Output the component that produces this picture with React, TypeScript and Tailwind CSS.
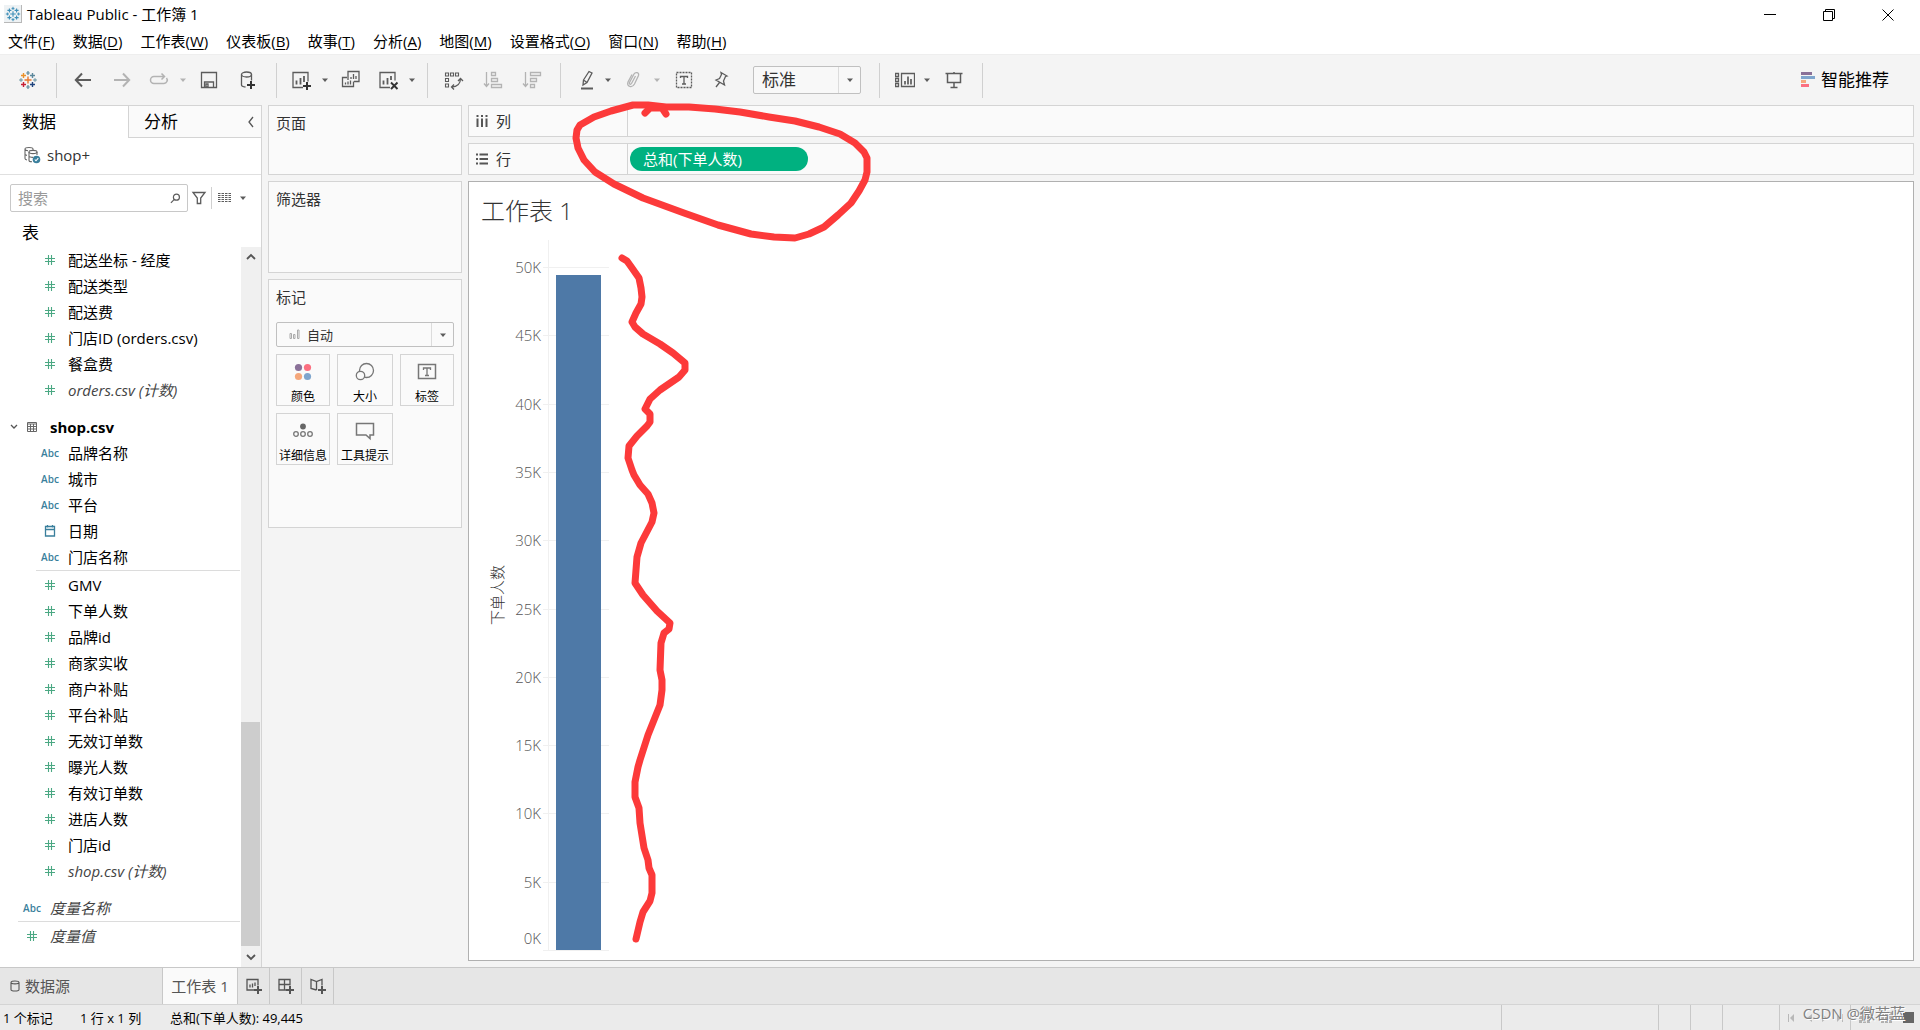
import { useState } from 'react';
import type { ReactNode } from 'react';
import clsx from 'clsx';

const menus = [
  { label: '文件', key: 'F' },
  { label: '数据', key: 'D' },
  { label: '工作表', key: 'W' },
  { label: '仪表板', key: 'B' },
  { label: '故事', key: 'T' },
  { label: '分析', key: 'A' },
  { label: '地图', key: 'M' },
  { label: '设置格式', key: 'O' },
  { label: '窗口', key: 'N' },
  { label: '帮助', key: 'H' },
];

type Field = { type: 'num' | 'abc' | 'date'; name: string; italic?: boolean };

const orderFields: Field[] = [
  { type: 'num', name: '配送坐标 - 经度' },
  { type: 'num', name: '配送类型' },
  { type: 'num', name: '配送费' },
  { type: 'num', name: '门店ID (orders.csv)' },
  { type: 'num', name: '餐盒费' },
  { type: 'num', name: 'orders.csv (计数)', italic: true },
];

const shopDimensions: Field[] = [
  { type: 'abc', name: '品牌名称' },
  { type: 'abc', name: '城市' },
  { type: 'abc', name: '平台' },
  { type: 'date', name: '日期' },
  { type: 'abc', name: '门店名称' },
];

const shopMeasures: Field[] = [
  { type: 'num', name: 'GMV' },
  { type: 'num', name: '下单人数' },
  { type: 'num', name: '品牌id' },
  { type: 'num', name: '商家实收' },
  { type: 'num', name: '商户补贴' },
  { type: 'num', name: '平台补贴' },
  { type: 'num', name: '无效订单数' },
  { type: 'num', name: '曝光人数' },
  { type: 'num', name: '有效订单数' },
  { type: 'num', name: '进店人数' },
  { type: 'num', name: '门店id' },
  { type: 'num', name: 'shop.csv (计数)', italic: true },
];

function Icon({ children, size = 20, className }: { children: ReactNode; size?: number; className?: string }) {
  return (
    <svg width={size} height={size} viewBox={`0 0 ${size} ${size}`} fill="none" stroke="currentColor" strokeWidth="1.3" className={clsx('shrink-0', className)} aria-hidden="true">
      {children}
    </svg>
  );
}

function Logo({ color = false, size = 20 }: { color?: boolean; size?: number }) {
  const c = color ? ['#e8762d', '#5b879b', '#eb9129', '#c72035', '#1f447e', '#59879b', '#7099a6'] : Array(7).fill('#3f8fb8');
  return (
    <svg width={size} height={size} viewBox="0 0 20 20" fill="none" aria-hidden="true" className="shrink-0">
      <path d="M10 6.5v7M6.5 10h7" stroke={c[0]} strokeWidth="1.4" />
      <path d="M14.5 3v5M12 5.5h5" stroke={c[1]} strokeWidth="1.4" />
      <path d="M5.5 3v5M3 5.5h5" stroke={c[2]} strokeWidth="1.4" />
      <path d="M5.5 12v5M3 14.5h5" stroke={c[3]} strokeWidth="1.4" />
      <path d="M14.5 12v5M12 14.5h5" stroke={c[4]} strokeWidth="1.4" />
      <path d="M10 1v4M8.2 3h3.6M10 15v4M8.2 17h3.6" stroke={c[5]} strokeWidth="1.2" />
      <path d="M1 10h4M3 8.2v3.6M15 10h4M17 8.2v3.6" stroke={c[6]} strokeWidth="1.2" />
    </svg>
  );
}

function Caret({ className }: { className?: string }) {
  return (
    <svg width="8" height="8" viewBox="0 0 8 8" className={clsx('shrink-0', className)} fill="currentColor" aria-hidden="true">
      <path d="M1 2.5h6L4 6z" />
    </svg>
  );
}

function Tool({ label, className, children }: { label: string; className?: string; children: ReactNode }) {
  return (
    <button type="button" aria-label={label} className={clsx('shrink-0', className)}>
      {children}
    </button>
  );
}

function Divider({ className }: { className: string }) {
  return <div className={clsx('w-px h-[35px] bg-[#d0d0d0] shrink-0', className)} />;
}

function Toolbar() {
  return (
    <div className="h-[51px] bg-[#f4f4f4] border-t border-[#eeeeee] flex items-center text-[#5c5c5c]">
      <Tool label="开始页面" className="ml-[18px]"><Logo color /></Tool>
      <Divider className="ml-[18px]" />
      <Tool label="撤销" className="ml-4">
        <Icon><path d="M18 10H3M9 3.5L2.8 10L9 16.5" strokeWidth="2" /></Icon>
      </Tool>
      <Tool label="重做" className="ml-[19px] text-[#b3b3b3]">
        <Icon><path d="M2 10h15M11 3.5L17.2 10L11 16.5" strokeWidth="2" /></Icon>
      </Tool>
      <Tool label="重播" className="ml-[17px] text-[#b3b3b3]">
        <Icon><path d="M15 6.5H5a3.500 3.500 0 0 0 0 7h10a3.400 3.400 0 0 0 2.500-5.500M12.500 3.500l3 3-3 3" strokeWidth="1.5" /></Icon>
      </Tool>
      <Caret className="ml-[10px] text-[#b3b3b3]" />
      <Tool label="保存" className="ml-3">
        <Icon><path d="M2.5 2.5h15v15h-15zM5.5 17v-5h9v5M7 14h2v3H7z" /></Icon>
      </Tool>
      <Tool label="新建数据源" className="ml-[19px]">
        <Icon>
          <ellipse cx="8.5" cy="4.5" rx="5" ry="2.5" />
          <path d="M3.5 4.5v10.5c0 1 2 1.8 4 2M13.5 4.5v6" />
          <path d="M13 11v8M9 15h8" stroke="#333" strokeWidth="2" />
        </Icon>
      </Tool>
      <Divider className="ml-[18px]" />
      <Tool label="新建工作表" className="ml-[15px]">
        <Icon>
          <path d="M11 17.5H1V2.5h15v9" />
          <path d="M4.5 14.5v-4M8.5 14.5V8M12 12V6" strokeWidth="1.8" />
          <path d="M15 12v8M11 16h8" stroke="#333" strokeWidth="2" />
        </Icon>
      </Tool>
      <Caret className="ml-[9px]" />
      <Tool label="复制工作表" className="ml-3">
        <Icon>
          <path d="M7 10V1.5h11v10h-5M6 7.5H1.5v9h11v-5" />
          <path d="M10 9V7M12.5 9V4M15 9V6M4.5 14.5v-2M7 14.5v-3M9.5 14.5v-4" />
        </Icon>
      </Tool>
      <Tool label="清除工作表" className="ml-[18px]">
        <Icon>
          <path d="M11 17.5H1V2.5h15v8" />
          <path d="M4.5 14.5v-4M8.5 14.5V8M12 10V6" strokeWidth="1.8" />
          <path d="M12 12.5l6.5 6.5M18.5 12.5L12 19" stroke="#333" strokeWidth="1.9" />
        </Icon>
      </Tool>
      <Caret className="ml-[9px]" />
      <Divider className="ml-[11px]" />
      <Tool label="交换行和列" className="ml-4">
        <Icon>
          <path d="M1.5 3h3v3h-3zM6.500 3h3v3h-3zM11.500 3h3v3h-3zM1.500 8.500h3v3h-3zM1.500 14h3v3h-3z" strokeWidth="1.1" />
          <path d="M16.5 8.500c0 5-3 8.500-9 8.500M14 11l2.500-2.500L19 11M10 14.500L7.500 17l2.500 2.500" />
        </Icon>
      </Tool>
      <Tool label="升序排序" className="ml-[19px] text-[#b3b3b3]">
        <Icon><path d="M3.5 2v14M1 13.5l2.500 3 2.500-3M8.500 2.500h4v3h-4zM8.500 8.500h6v3h-6zM8.500 14.500h10v3h-10z" /></Icon>
      </Tool>
      <Tool label="降序排序" className="ml-[19px] text-[#b3b3b3]">
        <Icon><path d="M3.5 2v14M1 13.5l2.500 3 2.500-3M8.500 2.500h10v3h-10zM8.500 8.500h6v3h-6zM8.500 14.500h4v3h-4z" /></Icon>
      </Tool>
      <Divider className="ml-[18px]" />
      <Tool label="突出显示" className="ml-4">
        <Icon>
          <path d="M6.5 10l5.500-8.500 3 1.500-5 9.500-4 2.500zM6.500 10l3.500 2.500" />
          <path d="M4 18.500h12" strokeWidth="2" />
        </Icon>
      </Tool>
      <Caret className="ml-[7px]" />
      <Tool label="组成员" className="ml-[11px] text-[#b3b3b3]">
        <Icon><path d="M12.5 6l-4 7.500c-1 1.500-2.500.5-2-1L11 4c1.500-2.500 5.500-1.500 4.500 1.500L11.500 14c-2.500 4.500-8 2.500-6.500-2L9 4.500" /></Icon>
      </Tool>
      <Caret className="ml-[10px] text-[#b3b3b3]" />
      <Tool label="显示标记标签" className="ml-[13px]">
        <Icon>
          <path d="M2.5 2.5h15v15h-15z" strokeDasharray="2 1" />
          <path d="M6.5 8V6.500h7V8M10 6.500v7.500M8 14h4" />
        </Icon>
      </Tool>
      <Tool label="固定轴" className="ml-[17px]">
        <Icon><path d="M10 2.500l6 3.500-1.500.5-2 4.500 1 4-8.500-5 3.500-1.500 2-4zM8.500 12.500L5 17" /></Icon>
      </Tool>
      <div className="relative ml-[22px] w-[108px]">
        <select aria-label="适合" className="appearance-none w-full h-7 pl-2 border border-[#c0c0c0] rounded-[2px] bg-[#f8f8f8] text-[17px] leading-6 text-[#333]">
          <option>标准</option>
          <option>适合宽度</option>
          <option>适合高度</option>
          <option>整个视图</option>
        </select>
        <span className="absolute right-0 inset-y-px w-[23px] border-l border-[#dcdcdc] flex items-center justify-center pointer-events-none">
          <Caret />
        </span>
      </div>
      <Divider className="ml-[18px]" />
      <Tool label="显示/隐藏卡" className="ml-[15px]">
        <Icon>
          <path d="M.5 3.500h3v3h-3zM.5 8.500h3v3h-3zM.5 13.500h3v3h-3zM6.500 3.500h13v13h-13z" />
          <path d="M10 14.500V11M13 14.500V6.500M16 14.500V9" strokeWidth="1.7" />
        </Icon>
      </Tool>
      <Caret className="ml-2" />
      <Tool label="演示模式" className="ml-[13px]">
        <Icon><path d="M1.500 3.500h17M3.500 3.500v9h13v-9M10 2v2M10 13v4.500M6.500 17.500h7" strokeWidth="1.5" /></Icon>
      </Tool>
      <Divider className="ml-[18px]" />
      <button type="button" className="ml-auto mr-[31px] flex items-center gap-[6px] text-[17px] text-black">
        <svg width="14" height="16" viewBox="0 0 14 16" aria-hidden="true">
          <path d="M0 0h11v3H0z" fill="#8a7198" />
          <path d="M0 4h14v3H0z" fill="#7fa5cd" />
          <path d="M0 8h5v3H0z" fill="#f5a77b" />
          <path d="M0 12h8v3H0z" fill="#fb6f80" />
        </svg>
        智能推荐
      </button>
    </div>
  );
}

function FieldIcon({ type }: { type: Field['type'] }) {
  if (type === 'abc') return <span className="w-4 flex justify-center text-[10px] leading-4 font-semibold text-[#3a7f9c]">Abc</span>;
  if (type === 'date') {
    return (
      <Icon size={16} className="text-[#3a7f9c]">
        <path d="M3.5 3.5h9v9.500h-9zM3.500 6.500h9M5.500 2v2.500M10.500 2v2.500" />
      </Icon>
    );
  }
  return (
    <Icon size={16} className="text-[#4ba883]">
      <path d="M6.5 3v10M9.5 3v10M3 6.500h10M3 9.500h10" strokeWidth="1.1" />
    </Icon>
  );
}

function FieldRow({ field, className = 'pl-[42px]' }: { field: Field; className?: string }) {
  return (
    <li className={clsx('h-[26px] flex items-center gap-[10px] whitespace-nowrap', className)}>
      <FieldIcon type={field.type} />
      <span className={field.italic ? 'italic text-[#444]' : ''}>{field.name}</span>
    </li>
  );
}

function DataPane() {
  const [search, setSearch] = useState('');
  return (
    <aside className="w-[262px] shrink-0 bg-white border-r border-t border-[#d4d4d4] flex flex-col">
      <div className="h-8 flex shrink-0 text-[17px]">
        <button type="button" className="w-32 pl-[22px] text-left">数据</button>
        <div className="flex-1 flex items-center justify-between pl-[15px] pr-[6px] bg-[#fafafa] border-l border-b border-[#d4d4d4]">
          <button type="button">分析</button>
          <button type="button" aria-label="折叠" className="text-[#555]">
            <svg width="8" height="12" viewBox="0 0 8 12" fill="none" stroke="currentColor" strokeWidth="1.3"><path d="M6 1L2 6l4 5" /></svg>
          </button>
        </div>
      </div>
      <div className="h-[37px] shrink-0 flex items-center gap-[6px] pl-[23px] pb-[2px] border-b border-[#e0e0e0] text-[#333]">
        <svg width="18" height="18" viewBox="0 0 18 18" fill="none" stroke="#666" strokeWidth="1.1" aria-hidden="true">
          <path d="M4 14c-1.5-.3-2-.7-2-1.5V3c0-2 8-2 8 0v1M2 3c0 1 1.5 1.6 3 1.7M2 8c0 .8 1 1.2 2 1.4" />
          <ellipse cx="10" cy="6" rx="4" ry="1.6" />
          <path d="M6 6v8.500c0 .8 1.500 1.300 3 1.300M14 6v3M6 10c0 .9 2 1.500 4 1.400" />
          <circle cx="13.5" cy="13.5" r="3.8" fill="#3a7f9c" stroke="none" />
          <path d="M11.8 13.5l1.2 1.3 2.3-2.600" stroke="#fff" />
        </svg>
        shop+
      </div>
      <div className="mt-[9px] mx-[10px] flex items-center shrink-0 text-[#5c5c5c]">
        <div className="w-[178px] h-7 flex items-center border border-[#c8c8c8] rounded-[2px] pl-[7px] pr-[6px]">
          <input type="text" aria-label="搜索" placeholder="搜索" value={search} onChange={(e) => setSearch(e.target.value)} className="min-w-0 flex-1 outline-none placeholder:text-[#999]" />
          <svg width="11" height="11" viewBox="0 0 12 12" fill="none" stroke="currentColor" strokeWidth="1.3" aria-hidden="true">
            <circle cx="7" cy="4.5" r="3.3" /><path d="M4.7 7L1 10.7" />
          </svg>
        </div>
        <button type="button" aria-label="筛选字段" className="ml-[3px]">
          <Icon size={16}><path d="M2 2.5h12L9.7 8v5.500H6.300V8z" /></Icon>
        </button>
        <div className="ml-1 w-px h-[22px] bg-[#d0d0d0]" />
        <button type="button" aria-label="查看方式" className="ml-[6px] flex items-center gap-[8px]">
          <svg width="13" height="10" viewBox="0 0 13 10" fill="none" stroke="currentColor" strokeDasharray="2.5 1" aria-hidden="true">
            <path d="M0 .5h13M0 2.5h13M0 4.5h13M0 6.5h13M0 8.5h13" />
          </svg>
          <Caret />
        </button>
      </div>
      <h2 className="h-[35px] shrink-0 pl-[22px] pt-[6px] flex items-center text-[17px]">表</h2>
      <div className="flex-1 min-h-0 flex">
        <ul className="flex-1 min-w-0 pr-px">
          {orderFields.map((f) => <FieldRow key={f.name} field={f} />)}
          <li className="mt-[11px] h-[26px] flex items-center font-bold">
            <svg width="8" height="6" viewBox="0 0 8 6" fill="none" stroke="#555" strokeWidth="1.3" className="ml-[10px]" aria-hidden="true"><path d="M1 1l3 3 3-3" /></svg>
            <Icon size={12} className="ml-2 mr-3 text-[#666]"><path d="M1.5 1.5h9v9h-9zM1.500 3h9M1.500 5.500h9M1.500 8h9M4.500 3v7.500M7.500 3v7.500" strokeWidth="1" /></Icon>
            shop.csv
          </li>
          {shopDimensions.map((f) => <FieldRow key={f.name} field={f} />)}
          <li className="ml-9 h-px bg-[#dcdcdc]" />
          <li className="h-px" />
          {shopMeasures.map((f) => <FieldRow key={f.name} field={f} />)}
          <li className="h-[11px]" />
          <FieldRow field={{ type: 'abc', name: '度量名称', italic: true }} className="pl-6" />
          <li className="ml-[18px] h-px bg-[#dcdcdc]" />
          <li className="h-px" />
          <FieldRow field={{ type: 'num', name: '度量值', italic: true }} className="pl-6" />
        </ul>
        <div className="w-5 shrink-0 flex flex-col bg-[#f0f0f0] text-[#555]">
          <button type="button" aria-label="向上滚动" className="h-5 flex items-center justify-center">
            <svg width="10" height="8" viewBox="0 0 10 8" fill="none" stroke="currentColor" strokeWidth="1.8"><path d="M1 6l4-4 4 4" /></svg>
          </button>
          <div className="flex-1 flex flex-col justify-end">
            <div className="h-[33%] w-[19px] bg-[#cdcdcd]" />
          </div>
          <button type="button" aria-label="向下滚动" className="h-[21px] flex items-center justify-center">
            <svg width="10" height="8" viewBox="0 0 10 8" fill="none" stroke="currentColor" strokeWidth="1.8"><path d="M1 2l4 4 4-4" /></svg>
          </button>
        </div>
      </div>
    </aside>
  );
}

function Card({ title, className, children }: { title: string; className: string; children?: ReactNode }) {
  return (
    <section className={clsx('bg-[#fafafa] border border-[#d4d4d4] px-[7px] pt-[5px]', className)}>
      <h3 className="leading-6 text-[#333]">{title}</h3>
      {children}
    </section>
  );
}

function MarkButton({ label, children }: { label: string; children: ReactNode }) {
  return (
    <button type="button" className="h-[52px] border border-[#d4d4d4] flex flex-col items-center justify-between pt-[7px] text-xs leading-4 text-black whitespace-nowrap">
      {children}
      {label}
    </button>
  );
}

function MarksCard() {
  return (
    <Card title="标记" className="h-[249px]">
      <div className="relative mt-[13px]">
        <select aria-label="标记类型" className="appearance-none w-full h-[25px] pl-[30px] border border-[#c0c0c0] rounded-[2px] bg-[#fafafa] text-[13px] leading-5 text-[#333]">
          <option>自动</option>
          <option>条形图</option>
          <option>线</option>
        </select>
        <svg width="11" height="11" viewBox="0 0 11 11" className="absolute left-[13px] top-[7px] pointer-events-none" fill="none" stroke="#aaa" aria-hidden="true">
          <path d="M1 4.5h1.500v5H1zM4.500 5.500H6v4H4.500zM8.500 1H10v8.500H8.500z" />
        </svg>
        <span className="absolute right-0 inset-y-px w-[23px] border-l border-[#dcdcdc] flex items-center justify-center pointer-events-none text-[#5c5c5c]">
          <Caret />
        </span>
      </div>
      <div className="mt-[7px] grid grid-cols-[54fr_56fr_54fr] gap-[7px] text-[#777]">
        <MarkButton label="颜色">
          <Icon>
            <g stroke="none">
              <circle cx="5.5" cy="5.5" r="3.6" fill="#8a7198" />
              <circle cx="14.5" cy="5.5" r="3.6" fill="#fb6f80" />
              <circle cx="5.5" cy="14.5" r="3.6" fill="#f5a77b" />
              <circle cx="14.5" cy="14.5" r="3.6" fill="#7fa5cd" />
            </g>
          </Icon>
        </MarkButton>
        <MarkButton label="大小">
          <Icon className="text-[#777]"><circle cx="11.5" cy="8.5" r="7" /><circle cx="5.5" cy="13.5" r="4.2" fill="#fafafa" /></Icon>
        </MarkButton>
        <MarkButton label="标签">
          <Icon className="text-[#777]"><path d="M1.5 2.5h17v14h-17z" strokeWidth="1.5" /><path d="M6.5 8V6h7v2M10 6v7.500M8 13.500h4" /></Icon>
        </MarkButton>
        <MarkButton label="详细信息">
          <Icon className="text-[#777]">
            <circle cx="10" cy="5.5" r="2.9" fill="#666" stroke="none" />
            <circle cx="3" cy="13" r="2.3" /><circle cx="10" cy="13" r="2.3" /><circle cx="17" cy="13" r="2.3" />
          </Icon>
        </MarkButton>
        <MarkButton label="工具提示">
          <Icon className="text-[#777]"><path d="M1.5 2.5h17v11.500h-3.500v3.500l-4-3.500H1.500z" strokeWidth="1.5" /></Icon>
        </MarkButton>
      </div>
    </Card>
  );
}

function Shelf({ label, icon, children }: { label: string; icon: ReactNode; children?: ReactNode }) {
  return (
    <div className="h-8 shrink-0 flex bg-[#fafafa] border border-[#d4d4d4]">
      <div className="w-[159px] border-r border-[#d4d4d4] flex items-center gap-2 pl-[7px] text-[#333]">
        {icon}
        {label}
      </div>
      <div className="flex-1 flex items-center pl-[2px]">{children}</div>
    </div>
  );
}

const ticks = [50, 45, 40, 35, 30, 25, 20, 15, 10, 5, 0];
const AXIS_TOP = 27;
const AXIS_BOTTOM = 710;

function BarChart() {
  const y = (v: number) => Math.round(AXIS_BOTTOM - (v / 50) * (AXIS_BOTTOM - AXIS_TOP)) + 0.5;
  const barTop = Math.floor(y(49.445));
  return (
    <svg width="140" height="716" viewBox="0 0 140 716" className="block ml-px" role="img" aria-label="下单人数">
      <text transform="translate(33 355) rotate(-90)" textAnchor="middle" className="fill-[#333] text-[15px] font-light">下单人数</text>
      {ticks.map((t) => (
        <g key={t}>
          <path d={`M73 ${y(t)}h66`} stroke="#f0f0f0" />
          <text x="71" y={t === 0 ? 704 : y(t) + 5} textAnchor="end" className="fill-[#555] text-[15px] font-light">{t}K</text>
        </g>
      ))}
      <path d="M78.5 0v710" stroke="#f0f0f0" />
      <rect x="86" y={barTop} width="45" height={AXIS_BOTTOM - barTop} fill="#4e79a7" />
    </svg>
  );
}

function SheetTabs() {
  return (
    <div className="h-[37px] shrink-0 flex items-stretch bg-[#e6e6e6] border-t border-[#c8c8c8] text-[#555]">
      <button type="button" className="w-[163px] border-r border-[#c8c8c8] flex items-center gap-[5px] pl-[10px] pb-px">
        <svg width="10" height="12" viewBox="0 0 10 12" fill="none" stroke="currentColor" strokeWidth="1.1" aria-hidden="true">
          <path d="M1 2.5v7c0 2 8 2 8 0v-7c0-2-8-2-8 0c0 1.800 8 1.800 8 0" />
        </svg>
        数据源
      </button>
      <button type="button" className="w-[75px] border-r border-[#c8c8c8] bg-[#fafafa] pb-px text-center whitespace-nowrap">工作表 1</button>
      <button type="button" aria-label="新建工作表" className="w-8 border-r border-[#c8c8c8] flex items-center justify-center">
        <Icon size={16}><path d="M8 12H1V1.500h11v6M4 9.500v-3M6.500 9.500v-4M9 8V4.500" /><path d="M12 8v8M8 12h8" strokeWidth="2" /></Icon>
      </button>
      <button type="button" aria-label="新建仪表板" className="w-8 border-r border-[#c8c8c8] flex items-center justify-center">
        <Icon size={16}><path d="M8 12H1V1.500h11v6M1 6.500h11M6.500 1.500V12" /><path d="M12 8v8M8 12h8" strokeWidth="2" /></Icon>
      </button>
      <button type="button" aria-label="新建故事" className="w-8 border-r border-[#c8c8c8] flex items-center justify-center">
        <Icon size={16}><path d="M6.5 12L1 10.500V1.500l5.500 2 5.500-2v6M6.500 3.500V12" /><path d="M12 8v8M8 12h8" strokeWidth="2" /></Icon>
      </button>
    </div>
  );
}

function StatusBar() {
  return (
    <footer className="h-[26px] shrink-0 flex items-stretch bg-[#ebebeb] border-t border-[#d4d4d4] text-[13px] leading-[26px] text-black whitespace-nowrap">
      <span className="w-[78px] pl-[3px]">1 个标记</span>
      <span className="w-[92px] pl-[2px]">1 行 x 1 列</span>
      <span>总和(下单人数): 49,445</span>
      <div className="ml-auto w-[157px] border-l border-[#c8c8c8]" />
      <div className="w-8 border-l border-[#c8c8c8]" />
      <div className="w-8 border-l border-[#c8c8c8]" />
      <div className="w-[57px] border-l border-[#c8c8c8]" />
      <div className="relative w-[71px] border-l border-[#c8c8c8] flex items-center text-[#b8b8b8]">
        <svg width="56" height="8" viewBox="0 0 56 8" className="ml-2" fill="currentColor" aria-hidden="true">
          <path d="M0 0h1v8H0zM6 0v8L2 4zM24 0v8L19 4zM34 0v8l5-4zM49 0v8l4-4zM54 0h1v8h-1z" />
        </svg>
      </div>
      <div className="relative w-[70px] border-l border-[#c8c8c8] flex items-center">
        <svg width="55" height="11" viewBox="0 0 55 11" className="ml-2" aria-hidden="true">
          <path d="M0 0h3v3H0zM4 0h3v3H4zM8 0h3v3H8zM0 4h3v3H0zM4 4h3v3H4zM8 4h3v3H8zM0 8h3v3H0zM4 8h3v3H4zM8 8h3v3H8zM22 0h3v3H22zM26 0h3v3H26zM30 0h3v3H30zM22 4h3v3H22zM26 4h3v3H26zM30 4h3v3H30zM22 8h3v3H22zM26 8h3v3H26zM30 8h3v3H30z" fill="#b0b0b0" />
          <path d="M44 0h11v11H44z" fill="#666" />
        </svg>
        <span className="absolute right-[15px] -top-1 text-[15px] leading-6 text-[#808080] [text-shadow:1px_1px_0_#fff]">CSDN @微若蓝</span>
      </div>
    </footer>
  );
}

// Pen marks drawn over the workbook
function Ink() {
  return (
    <svg width="1920" height="1030" viewBox="0 0 1920 1030" className="absolute left-0 top-0 pointer-events-none" fill="none" stroke="#fc3a3a" strokeWidth="7" strokeLinecap="round" strokeLinejoin="round" aria-hidden="true">
      <path d="M633 105L611 111L594 117L580 125L577 130L576 138L578 148L584 160L595 172L614 184L643 198L684 213L718 225L751 234L774 237L795 238L809 234L824 227L838 215L851 203L859 191L865 180L867 172L867 158L864 152L855 143L840 134L819 127L795 121L769 117L740 112L715 109L689 107L666 107L648 105Z" />
      <path d="M645 113L650 108L662 108L666 114" />
      <path d="M622 258L627 261L632 268L639 278L641 288L642 297L641 304L636 313L632 322L635 327L643 334L660 344L673 353L685 363L685 370L679 377L660 390L650 399L645 409L650 414L650 422L647 426L637 436L629 446L628 458L632 470L634 475L640 485L648 494L652 503L654 513L652 522L641 543L637 557L635 583L643 595L657 611L670 623L669 629L664 633L661 643L660 670L662 680L662 690L660 705L648 735L640 760L638 767L635 782L635 797L639 808L640 823L644 848L648 860L649 868L652 875L652 893L650 901L643 912L640 922L636 939" />
    </svg>
  );
}

const windowButtons = [
  { label: '最小化', d: 'M4 12.5h12' },
  { label: '还原', d: 'M4.5 9.5h9v9h-9zM6.500 9V7.500h9v9h-1.500' },
  { label: '关闭', d: 'M4.5 7.5l11 11M15.500 7.500l-11 11' },
];

export default function App() {
  return (
    <div className="relative min-h-screen flex flex-col bg-[#f4f4f4] font-['Open_Sans','Noto_Sans_CJK_SC',sans-serif] text-[15px] leading-[22px] text-black overflow-hidden">
      <header className="bg-white shrink-0">
        <div className="h-7 flex items-center pl-1">
          <span className="w-[18px] h-[18px] bg-[#eef2f4] border-r border-b border-[#b8b8b8] flex items-center justify-center">
            <Logo size={16} />
          </span>
          <h1 className="ml-[5px]">Tableau Public - 工作簿 1</h1>
          <div className="ml-auto mr-5 flex items-center gap-[34px]">
            {windowButtons.map((b) => (
              <button key={b.label} type="button" aria-label={b.label} className="w-[25px] flex justify-center">
                <svg width="20" height="24" viewBox="0 0 20 24" fill="none" stroke="#000"><path d={b.d} /></svg>
              </button>
            ))}
          </div>
        </div>
        <nav className="h-[26px] flex items-center gap-[18px] pl-2">
          {menus.map((m) => (
            <button key={m.key} type="button" className="whitespace-nowrap">
              {m.label}(<span className="underline underline-offset-2">{m.key}</span>)
            </button>
          ))}
        </nav>
      </header>

      <Toolbar />

      <main className="flex-1 min-h-0 flex">
        <DataPane />
        <div className="w-[206px] shrink-0 flex flex-col gap-[6px] px-[6px]">
          <Card title="页面" className="h-[70px]" />
          <Card title="筛选器" className="h-[92px]" />
          <MarksCard />
        </div>
        <div className="flex-1 min-w-0 flex flex-col gap-[6px] pr-[6px] pb-[6px]">
          <Shelf label="列" icon={<Icon size={12} className="text-[#555]"><path d="M1.5 0v2M6 0v2M10.500 0v2M1.500 3.500v8.500M6 3.500v8.500M10.500 3.500v8.500" strokeWidth="2" /></Icon>} />
          <Shelf label="行" icon={<Icon size={12} className="text-[#555]"><path d="M0 1.5h2M0 6h2M0 10.500h2M3.500 1.500H12M3.500 6H12M3.500 10.500H12" strokeWidth="2" /></Icon>}>
            <button type="button" className="w-[178px] h-6 rounded-full bg-[#00b180] pl-[13px] text-left leading-6 text-white">总和(下单人数)</button>
          </Shelf>
          <section className="flex-1 bg-white border border-[#b0b0b0]">
            <h2 className="h-[58px] pl-3 flex items-center text-2xl font-light text-[#333]">工作表 1</h2>
            <BarChart />
          </section>
        </div>
      </main>

      <SheetTabs />
      <StatusBar />
      <Ink />
    </div>
  );
}
